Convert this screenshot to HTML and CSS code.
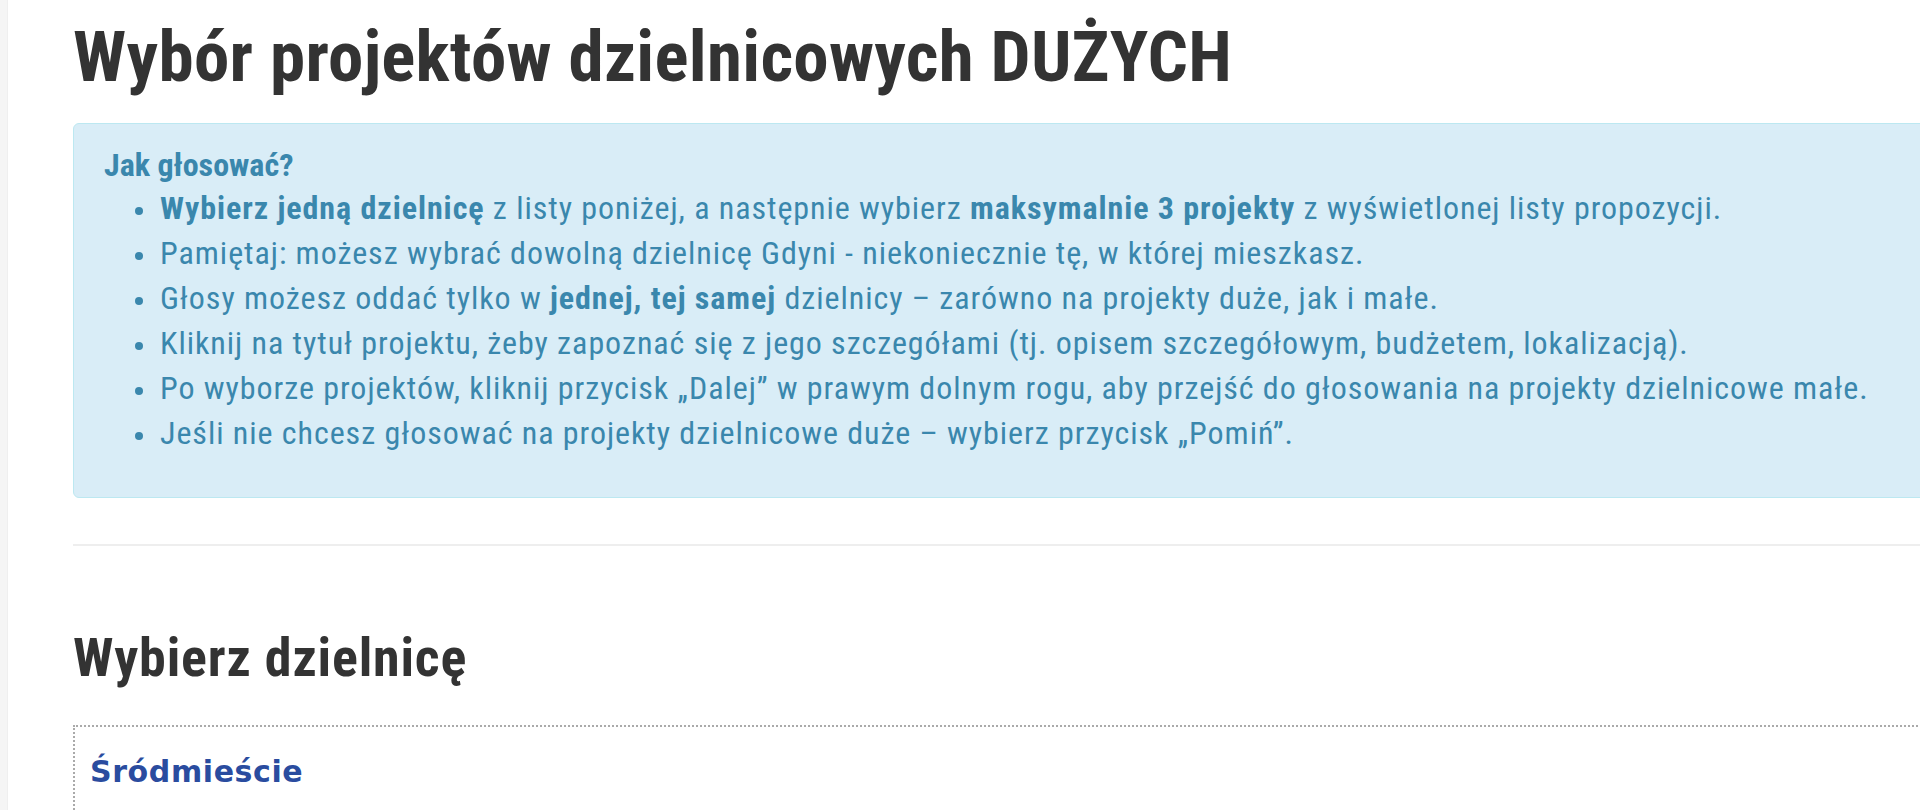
FILE: index.html
```html
<!DOCTYPE html>
<html lang="pl">
<head>
<meta charset="utf-8">
<title>Wybór projektów dzielnicowych DUŻYCH</title>
<link rel="stylesheet" href="styles.css">
</head>
<body>
<div class="page">
  <aside class="edge"></aside>
  <main class="content">
    <h1 class="title">Wybór projektów dzielnicowych DUŻYCH</h1>
    <div class="info">
      <p class="info-head">Jak głosować?</p>
      <ul class="info-list">
        <li><strong>Wybierz jedną dzielnicę</strong> z listy poniżej, a następnie wybierz <strong>maksymalnie 3 projekty</strong> z wyświetlonej listy propozycji.</li>
        <li>Pamiętaj: możesz wybrać dowolną dzielnicę Gdyni - niekoniecznie tę, w której mieszkasz.</li>
        <li>Głosy możesz oddać tylko w <strong>jednej, tej samej</strong> dzielnicy – zarówno na projekty duże, jak i małe.</li>
        <li>Kliknij na tytuł projektu, żeby zapoznać się z jego szczegółami (tj. opisem szczegółowym, budżetem, lokalizacją).</li>
        <li>Po wyborze projektów, kliknij przycisk „Dalej” w prawym dolnym rogu, aby przejść do głosowania na projekty dzielnicowe małe.</li>
        <li>Jeśli nie chcesz głosować na projekty dzielnicowe duże – wybierz przycisk „Pomiń”.</li>
      </ul>
    </div>
    <hr class="sep">
    <h2 class="subtitle">Wybierz dzielnicę</h2>
    <div class="district">
      <span class="district-name">Śródmieście</span>
    </div>
  </main>
</div>
</body>
</html>
```
FILE: styles.css
```css
html, body {
  margin: 0;
  padding: 0;
  background: #ffffff;
  overflow: hidden;
  height: 810px;
}

.page {
  display: flex;
  height: 810px;
}

.edge {
  flex: none;
  width: 7px;
  background: #f5f5f5;
  border-right: 1px solid #efefef;
}

.content {
  flex: none;
  width: 2000px;
  margin-left: 65px;
  padding-top: 18px;
  font-family: "Liberation Sans Narrow", "Roboto Condensed", "Liberation Sans", sans-serif;
}

.title {
  margin: 0;
  font-size: 71px;
  line-height: 77px;
  font-weight: 700;
  color: #333333;
  letter-spacing: 0.3px;
}

.info {
  margin-top: 28px;
  background: #d9edf7;
  border: 1px solid #bce8f1;
  border-radius: 6px;
  padding: 23px 30px 41px 30px;
  color: #3a87ad;
  font-size: 32px;
}

.info-head {
  margin: 0;
  font-weight: 700;
  line-height: 36px;
}

.info-list {
  margin: 3px 0 0 0;
  padding-left: 56px;
  list-style: none;
  line-height: 45px;
  letter-spacing: 0.95px;
}

.info-list li::before {
  content: "";
  display: inline-block;
  width: 8px;
  height: 8px;
  border-radius: 50%;
  background: currentColor;
  margin-left: -25px;
  margin-right: 17px;
  vertical-align: middle;
}

.info-list strong {
  font-weight: 700;
}

.sep {
  margin: 46px 0 0 0;
  border: 0;
  border-top: 2px solid #eeeeee;
  height: 0;
}

.subtitle {
  margin: 83px 0 0 0;
  font-size: 54px;
  line-height: 58px;
  font-weight: 700;
  color: #333333;
  letter-spacing: 0.8px;
}

.district {
  margin-top: 38px;
  border: 2px dotted #aaaaaa;
  border-right: 0;
  padding: 27px 15px 17px 15px;
  line-height: 36px;
}

.district-name {
  font-family: "DejaVu Sans", "Liberation Sans", sans-serif;
  font-weight: 700;
  font-size: 30px;
  letter-spacing: 0.6px;
  color: #2a4c9f;
}
```
